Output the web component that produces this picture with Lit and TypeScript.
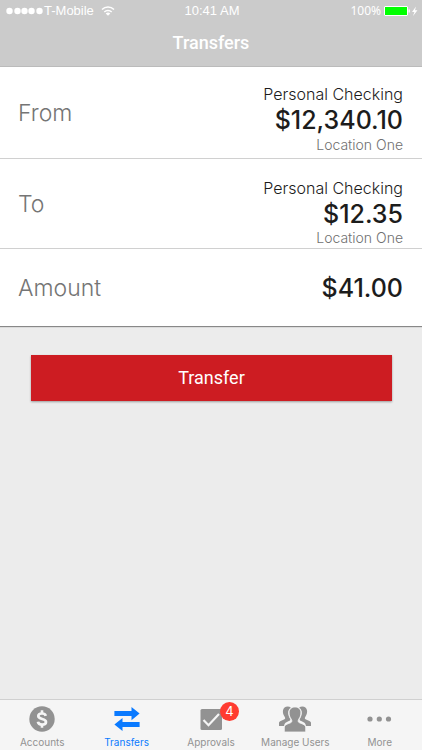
import { LitElement, html, css, svg } from "lit";
import { customElement, property } from "lit/decorators.js";
import { classMap } from "lit/directives/class-map.js";

const accountsIcon = svg`
  <circle cx="16" cy="14" r="12.7" fill="currentColor" />
  <path d="M19.800 10.800C19.300 9.200 18 8.500 16 8.500c-2.200 0-3.700 1-3.700 2.600 0 3.900 7.700 1.900 7.700 5.800 0 1.700-1.600 2.700-4 2.700-2.200 0-3.700-.9-4.100-2.800" fill="none" stroke="#f5f5f5" stroke-width="2.700" />
  <path d="M16 5.300v3.500M16 19.200v3.500" stroke="#f5f5f5" stroke-width="2.600" />`;

const transfersIcon = svg`
  <path d="M3.400 6H20.500V2L28.600 8.600L20.500 15.200V11H3.400zM28.600 17v5H11.500v4L3.400 19.500L11.500 13v4z" fill="currentColor" />`;

const approvalsIcon = svg`
  <rect x="5.500" y="4" width="21.500" height="21" rx="1.500" fill="currentColor" />
  <path d="M8.500 15l5 5.200L24 9" fill="none" stroke="#f5f5f5" stroke-width="2.200" />`;

const usersIcon = svg`
  <g fill="currentColor">
    <path d="M0 21v-3.300c0-1.300 1.500-2 5-3.300 1.600-.6 1.400-1.700.5-3C4.200 9.500 3.600 7.500 4 5.300 4.400 2.800 6.200 1.400 8.700 1.400c1.200 0 2.300.3 3.100 1C10 3.800 9 5.800 9.200 8.300c.2 2.400 1 4.100 2 5.600.5 1-.2 1.600-1.400 2.200C7 17.400 5.500 18 5 21z" />
    <path d="M32 21v-3.300c0-1.300-1.500-2-5-3.300-1.600-.6-1.400-1.700-.5-3 1.300-1.900 1.900-3.900 1.500-6.100-.4-2.500-2.200-3.900-4.700-3.900-1.200 0-2.300.3-3.100 1 1.800 1.400 2.800 3.400 2.600 5.900-.2 2.400-1 4.100-2 5.600-.5 1 .2 1.600 1.400 2.200 2.800 1.300 4.300 1.900 4.800 4.900z" />
    <path d="M16 2c3.500 0 6 2.300 5.900 5.900-.1 2.700-.9 4.500-2.200 6.300-.9 1.500-.7 3 .8 3.600 3.900 1.500 6 2.200 6.200 4.200V27H5.300v-5c.2-2 2.300-2.700 6.200-4.200 1.500-.6 1.700-2.100.8-3.600-1.300-1.800-2.100-3.600-2.200-6.300C10 4.300 12.500 2 16 2z" stroke="#f5f5f5" stroke-width="0.800" />
  </g>`;

const moreIcon = svg`
  <g fill="currentColor">
    <circle cx="6" cy="14" r="2.600" /><circle cx="15.300" cy="14" r="2.600" /><circle cx="24.500" cy="14" r="2.600" />
  </g>`;

const tabs = [
  { label: "Accounts", icon: accountsIcon },
  { label: "Transfers", icon: transfersIcon, active: true },
  { label: "Approvals", icon: approvalsIcon, badge: 4 },
  { label: "Manage Users", icon: usersIcon },
  { label: "More", icon: moreIcon },
];

@customElement("status-bar")
class StatusBar extends LitElement {
  static styles = css`
    :host {
      display: grid;
      grid-template-columns: 1fr auto 1fr;
      align-items: center;
      height: 22px;
      padding: 0 4px 0 6px;
      color: #fff;
      font: 13px/22px "Liberation Sans", Arial, sans-serif;
    }
    .side { display: flex; align-items: center; }
    .end { justify-content: flex-end; gap: 3px; font: 12px/22px "Noto Sans", sans-serif; }
    svg { display: block; }
    .wifi { margin-left: 7px; }
  `;
  render() {
    return html`
      <div class="side">
        <svg width="38" height="8" fill="#fff" aria-hidden="true">
          ${[3, 11, 18, 25, 33].map((x) => svg`<circle cx=${x + 0.5} cy="4" r="3.200" />`)}
        </svg>
        <span>T-Mobile</span>
        <svg class="wifi" width="14" height="10" viewBox="0 0 14 10" aria-hidden="true">
          <path d="M1 3.500a8.500 8.500 0 0 1 12 0M3.300 6a5.300 5.300 0 0 1 7.400 0" fill="none" stroke="#fff" stroke-width="1.500" />
          <path d="M4.700 7.500a3.300 3.300 0 0 1 4.600 0L7 9.800z" fill="#fff" />
        </svg>
      </div>
      <span>10:41 AM</span>
      <div class="side end">
        <span>100%</span>
        <svg width="34" height="12" viewBox="0 0 34 12" aria-hidden="true">
          <rect x="0.500" y="1.500" width="23" height="9" rx="0.500" fill="#0f0" stroke="#fff" />
          <path d="M24.500 4.500h1.300v3h-1.300z" fill="#fff" />
          <path d="M32 1.500L28 7h2.400L29 11l4.500-5.700H31z" fill="#fff" />
        </svg>
      </div>`;
  }
}

@customElement("transfer-row")
class TransferRow extends LitElement {
  @property() label = "";
  @property() account = "";
  @property() amount = "";
  @property() location = "";
  static styles = css`
    :host {
      display: flex;
      align-items: center;
      justify-content: space-between;
      padding: 0 19px 0 18px;
      box-sizing: border-box;
      background: #fff;
    }
    .label { color: #757575; font-size: 23px; line-height: 28px; font-weight: 300; }
    .details { text-align: right; color: #1c1c1c; }
    .details > div { white-space: nowrap; }
    .account { padding-top: 17px; font-size: 16px; line-height: 24px; font-weight: 300; }
    .amount { font-size: 25px; line-height: 28px; font-weight: 450; }
    .location { color: #707070; font-size: 14px; line-height: 20px; font-weight: 300; }
    :host(:first-child) .account { padding-top: 15px; }
    :host(:first-child) .location { padding: 1px 0 3px; }
  `;
  render() {
    return html`
      <div class="label">${this.label}</div>
      <div class="details">
        ${this.account ? html`<div class="account">${this.account}</div>` : ""}
        <div class="amount">${this.amount}</div>
        ${this.location ? html`<div class="location">${this.location}</div>` : ""}
      </div>`;
  }
}

@customElement("tab-bar")
class TabBar extends LitElement {
  static styles = css`
    :host { display: block; background: #f5f5f5; border-top: 1px solid #d0d0d0; }
    nav { display: grid; grid-template-columns: repeat(5, 1fr); }
    a {
      display: flex;
      flex-direction: column;
      align-items: center;
      padding: 5px 0 0;
      color: #929292;
      text-decoration: none;
      font-size: 10px;
      font-weight: 400;
      line-height: 15px;
      white-space: nowrap;
    }
    a.active { color: #0a7aff; }
    .icon { position: relative; height: 30px; }
    svg { display: block; }
    .badge {
      position: absolute;
      top: -3px;
      left: 25px;
      width: 19px;
      height: 19px;
      border-radius: 50%;
      background: #ff3b30;
      color: #fff;
      font-size: 13px;
      line-height: 19px;
      text-align: center;
    }
  `;
  render() {
    return html`<nav>
      ${tabs.map(
        (t) => html`<a href="#" class=${classMap({ active: !!t.active })}>
          <span class="icon">
            <svg width="32" height="28" viewBox="0 0 32 28" aria-hidden="true">${t.icon}</svg>
            ${t.badge ? html`<span class="badge">${t.badge}</span>` : ""}
          </span>
          <span>${t.label}</span>
        </a>`
      )}
    </nav>`;
  }
}

@customElement("app-root")
class AppRoot extends LitElement {
  static styles = css`
    :host {
      display: flex;
      flex-direction: column;
      min-height: 100vh;
      background: #ececec;
      font-family: Inter, "Liberation Sans", sans-serif;
    }
    header { background: #cbcbcb; border-bottom: 1px solid #bbb; }
    h1 {
      margin: 0;
      padding: 9px 0 11px;
      color: #fff;
      text-align: center;
      font: 500 18px/24px Roboto, sans-serif;
    }
    main { flex: 1; }
    .card { display: flex; flex-direction: column; box-shadow: 0 1px 1px #888; }
    transfer-row { border-bottom: 1px solid #d0d0d0; min-height: 77px; }
    transfer-row:last-child { border-bottom: 0; }
    button {
      display: block;
      width: calc(100% - 61px);
      margin: 29px 30px 0 31px;
      padding: 11px 0;
      border: 0;
      background: #cd1c22;
      color: #fff;
      box-shadow: 0 1px 2px rgba(0, 0, 0, 0.35);
      font: 400 18px/24px Roboto, sans-serif;
    }
  `;
  render() {
    return html`
      <header>
        <status-bar></status-bar>
        <h1>Transfers</h1>
      </header>
      <main>
        <div class="card">
          <transfer-row label="From" account="Personal Checking" amount="$12,340.10" location="Location One"></transfer-row>
          <transfer-row label="To" account="Personal Checking" amount="$12.35" location="Location One"></transfer-row>
          <transfer-row label="Amount" amount="$41.00"></transfer-row>
        </div>
        <button type="button">Transfer</button>
      </main>
      <tab-bar></tab-bar>`;
  }
}
